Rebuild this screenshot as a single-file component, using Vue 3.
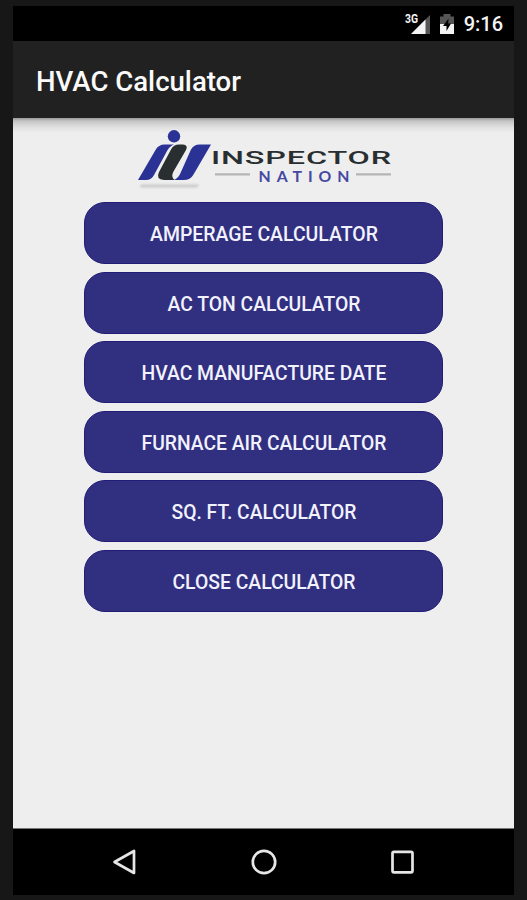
<script setup>
const actions = [
  { label: 'AMPERAGE CALCULATOR', width: 228 },
  { label: 'AC TON CALCULATOR', width: 193 },
  { label: 'HVAC MANUFACTURE DATE', width: 245 },
  { label: 'FURNACE AIR CALCULATOR', width: 245 },
  { label: 'SQ. FT. CALCULATOR', width: 185 },
  { label: 'CLOSE CALCULATOR', width: 183 },
]
</script>

<template>
  <div class="device">
    <div class="screen">
      <header class="status">
        <svg class="signal" viewBox="0 0 27 24" aria-label="3G signal">
          <path d="M25 3V22H6Z" fill="#555" />
          <path d="M20.5 7.5V22H6Z" fill="#f4f4f4" />
          <text x="0" y="11" class="network" textLength="13" lengthAdjust="spacingAndGlyphs">3G</text>
        </svg>
        <svg class="battery" viewBox="0 0 16 24">
          <path d="M4.500 2h7v2.500H15V12H1V4.500h3.500z" fill="#555" />
          <path d="M1 12h14v10H1z" fill="#f4f4f4" />
          <path d="M9.500 6.500 4 14h3.500v5L12 11.500H9.200z" fill="#000" />
        </svg>
        <time class="clock">9:16</time>
      </header>
      <div class="toolbar">
        <svg class="heading" width="206" height="36" role="heading">
          <text x="0" y="29" class="title" textLength="205" lengthAdjust="spacingAndGlyphs">HVAC Calculator</text>
        </svg>
      </div>
      <main class="content">
        <svg class="logo" width="260" height="66" viewBox="135 126 260 66">
          <defs>
            <filter id="soft" x="-10%" y="-200%" width="120%" height="500%"><feGaussianBlur stdDeviation="1" /></filter>
          </defs>
          <path d="M141 184.500H199L197 187.500H140Z" fill="#bdbdbd" opacity=".75" filter="url(#soft)" />
          <circle cx="174" cy="136.300" r="6.200" fill="#2b3295" />
          <path d="M138 180L155.500 150Q158.500 144.500 164.500 144.500H174Q169.500 146 167 151L154 175Q151.500 180 146 180Z" fill="#2b3295" />
          <path d="M171 149.500Q173.500 144.500 179 144.500H183Q188.500 145 186 150L173.500 171.500Q170.500 177 174.500 180H164Q155.500 179.500 159 172Z" fill="#292e31" />
          <path d="M191 149.500Q194 144.500 199.500 144.500H211L193.500 174.500Q190.500 180 183.500 180H174Q178.500 178 180.500 173Z" fill="#2b3295" />
          <text x="211" y="164.300" class="brand" textLength="181" lengthAdjust="spacingAndGlyphs">INSPECTOR</text>
          <path d="M215 174.300H250M356 174.300H391" stroke="#b4b5b4" stroke-width="2.200" />
          <text x="258.500" y="182" class="nation" textLength="91">NATION</text>
        </svg>
        <nav class="actions">
          <button v-for="action in actions" :key="action.label" class="action">
            <svg width="260" height="30">
              <text x="130" y="23" text-anchor="middle" class="label" :textLength="action.width" lengthAdjust="spacingAndGlyphs">{{ action.label }}</text>
            </svg>
          </button>
        </nav>
      </main>
      <footer class="navbar">
        <svg class="key" viewBox="0 0 28 28"><path d="M3.500 14 23 3V25Z" /></svg>
        <svg class="key" viewBox="0 0 28 28"><circle cx="14" cy="14" r="11.200" /></svg>
        <svg class="key" viewBox="0 0 28 28"><rect x="3.500" y="3.800" width="20" height="20.500" rx="1.500" /></svg>
      </footer>
    </div>
  </div>
</template>

<style>
body { margin: 0; }
</style>

<style scoped>
.device {
  box-sizing: border-box;
  width: 527px;
  height: 900px;
  padding: 6px 13px;
  background: #171717;
  font-family: Roboto, sans-serif;
}
.screen {
  display: flex;
  flex-direction: column;
  width: 501px;
  height: 889px;
  background: #000;
}
.status {
  box-sizing: border-box;
  display: flex;
  align-items: center;
  justify-content: flex-end;
  height: 35px;
  padding-right: 11px;
  color: #f4f4f4;
}
.signal { width: 27px; height: 24px; margin-right: 7px; }
.network { font: 700 12px Roboto, sans-serif; fill: #f4f4f4; stroke: #000; stroke-width: 1px; paint-order: stroke; }
.battery { width: 16px; height: 24px; margin-right: 9px; }
.clock { font-size: 20px; font-weight: 500; line-height: 24px; }
.toolbar {
  box-sizing: border-box;
  display: flex;
  align-items: center;
  height: 77px;
  padding-left: 23px;
  background: #212121;
}
.title { font: 500 28px Roboto, sans-serif; fill: #fafafa; }
.heading { overflow: visible; }
.content {
  box-sizing: border-box;
  display: flex;
  flex-direction: column;
  height: 711px;
  padding-top: 8px;
  background: linear-gradient(#999 0, #c4c4c4 3px, #e0e0e0 9px, #eee 15px);
  border-bottom: 1px solid #777;
}
.logo { margin-left: 122px; flex: none; }
.brand { font: 500 18.800px Roboto, sans-serif; fill: #292e31; letter-spacing: .5px; }
.nation { font: 700 15.800px Lato, sans-serif; fill: #4548a0; }
.actions { display: flex; flex-direction: column; gap: 7.500px; padding: 10.300px 71px 0; }
.action {
  box-sizing: border-box;
  display: flex;
  align-items: center;
  justify-content: center;
  height: 62px;
  padding: 0;
  background: #312f80;
  border: 1px solid #211d77;
  border-radius: 21px;
}
.label { font: 500 20px Roboto, sans-serif; fill: #f2f2fc; }
.navbar {
  display: flex;
  align-items: center;
  justify-content: center;
  gap: 111px;
  height: 66px;
}
.key { width: 28px; height: 28px; fill: none; stroke: #e6e6e6; stroke-width: 2.700px; stroke-linejoin: round; }
</style>
